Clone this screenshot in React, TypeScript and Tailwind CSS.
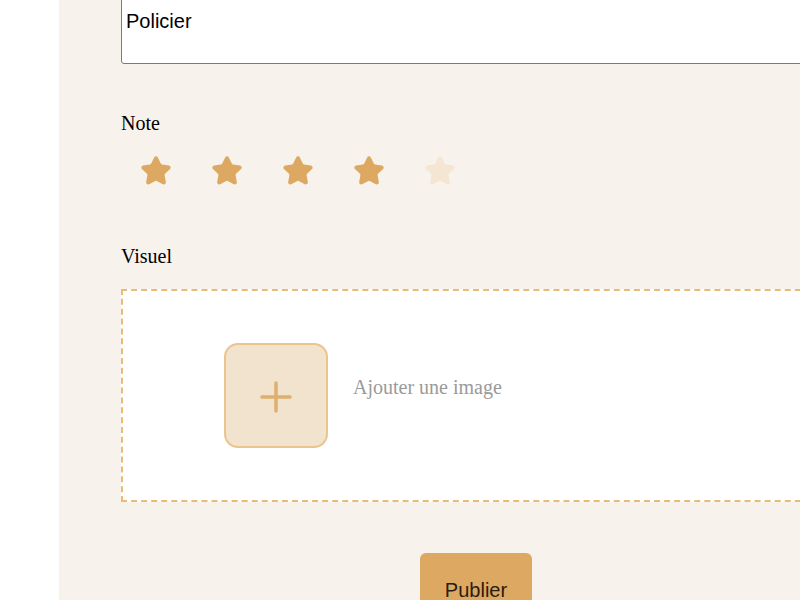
import React from "react";

const Star = ({ filled }: { filled: boolean }) => {
  const c = filled ? "#dca862" : "#f5e6d3";
  return (
    <svg width="32" height="32" viewBox="0 0 24 24" fill={c} stroke={c} strokeWidth="2" strokeLinecap="round" strokeLinejoin="round">
      <path d="M11.525 2.295a.53.53 0 0 1 .95 0l2.31 4.679a2.123 2.123 0 0 0 1.595 1.16l5.166.756a.53.53 0 0 1 .294.904l-3.736 3.638a2.123 2.123 0 0 0-.611 1.878l.882 5.14a.53.53 0 0 1-.771.56l-4.618-2.428a2.122 2.122 0 0 0-1.973 0L6.396 21.01a.53.53 0 0 1-.77-.56l.881-5.139a2.122 2.122 0 0 0-.611-1.879L2.16 9.795a.53.53 0 0 1 .294-.906l5.165-.755a2.122 2.122 0 0 0 1.597-1.16z" />
    </svg>
  );
};

export default function App() {
  const serif = { fontFamily: '"Liberation Serif", "Times New Roman", serif' };
  const sans = { fontFamily: '"Liberation Sans", Arial, sans-serif' };
  return (
    <div className="flex w-[800px] h-[600px] overflow-hidden bg-white">
      <div className="w-[59px] shrink-0 bg-white" />
      <div className="w-[834px] shrink-0 bg-[#f7f2ec] px-[62px]">
        <textarea
          defaultValue="Policier"
          className="block w-full h-[65px] mt-[-1px] resize-none bg-white border border-[#7a7a7a] rounded-b-[3px] pl-[4px] pt-[10px] text-[20px] leading-[23px] text-black outline-none"
          style={sans}
        />
        <div className="mt-[48px] text-[20px] leading-[23px] text-black" style={serif}>
          Note
        </div>
        <div className="mt-[20px] flex gap-[39px] pl-[19px]">
          <Star filled />
          <Star filled />
          <Star filled />
          <Star filled />
          <Star filled={false} />
        </div>
        <div className="mt-[58px] text-[20px] leading-[23px] text-black" style={serif}>
          Visuel
        </div>
        <div className="mt-[21px] h-[213px] border-2 border-dashed border-[#e8bb78] bg-white flex items-center pl-[101px]">
          <div className="w-[104px] h-[105px] shrink-0 rounded-[14px] border-2 border-[#eac58c] bg-[#f1e3cd] flex items-center justify-center">
            <svg width="32" height="32" viewBox="0 0 32 32" className="mt-[3px]">
              <path d="M2 16h28M16 2v28" stroke="#dba85e" strokeWidth="3.5" strokeLinecap="round" opacity="0.85" />
            </svg>
          </div>
          <div className="ml-[25px] mb-[16px] text-[20px] leading-[23px] text-[#9a9a9a]" style={serif}>
            Ajouter une image
          </div>
        </div>
        <div className="mt-[51px] flex justify-center">
          <button
            className="bg-[#dca862] rounded-[6px] px-[25px] pt-[29px] pb-[25px] text-[20px] leading-[16px] text-[#2a1c0e]"
            style={sans}
          >
            Publier
          </button>
        </div>
      </div>
    </div>
  );
}
